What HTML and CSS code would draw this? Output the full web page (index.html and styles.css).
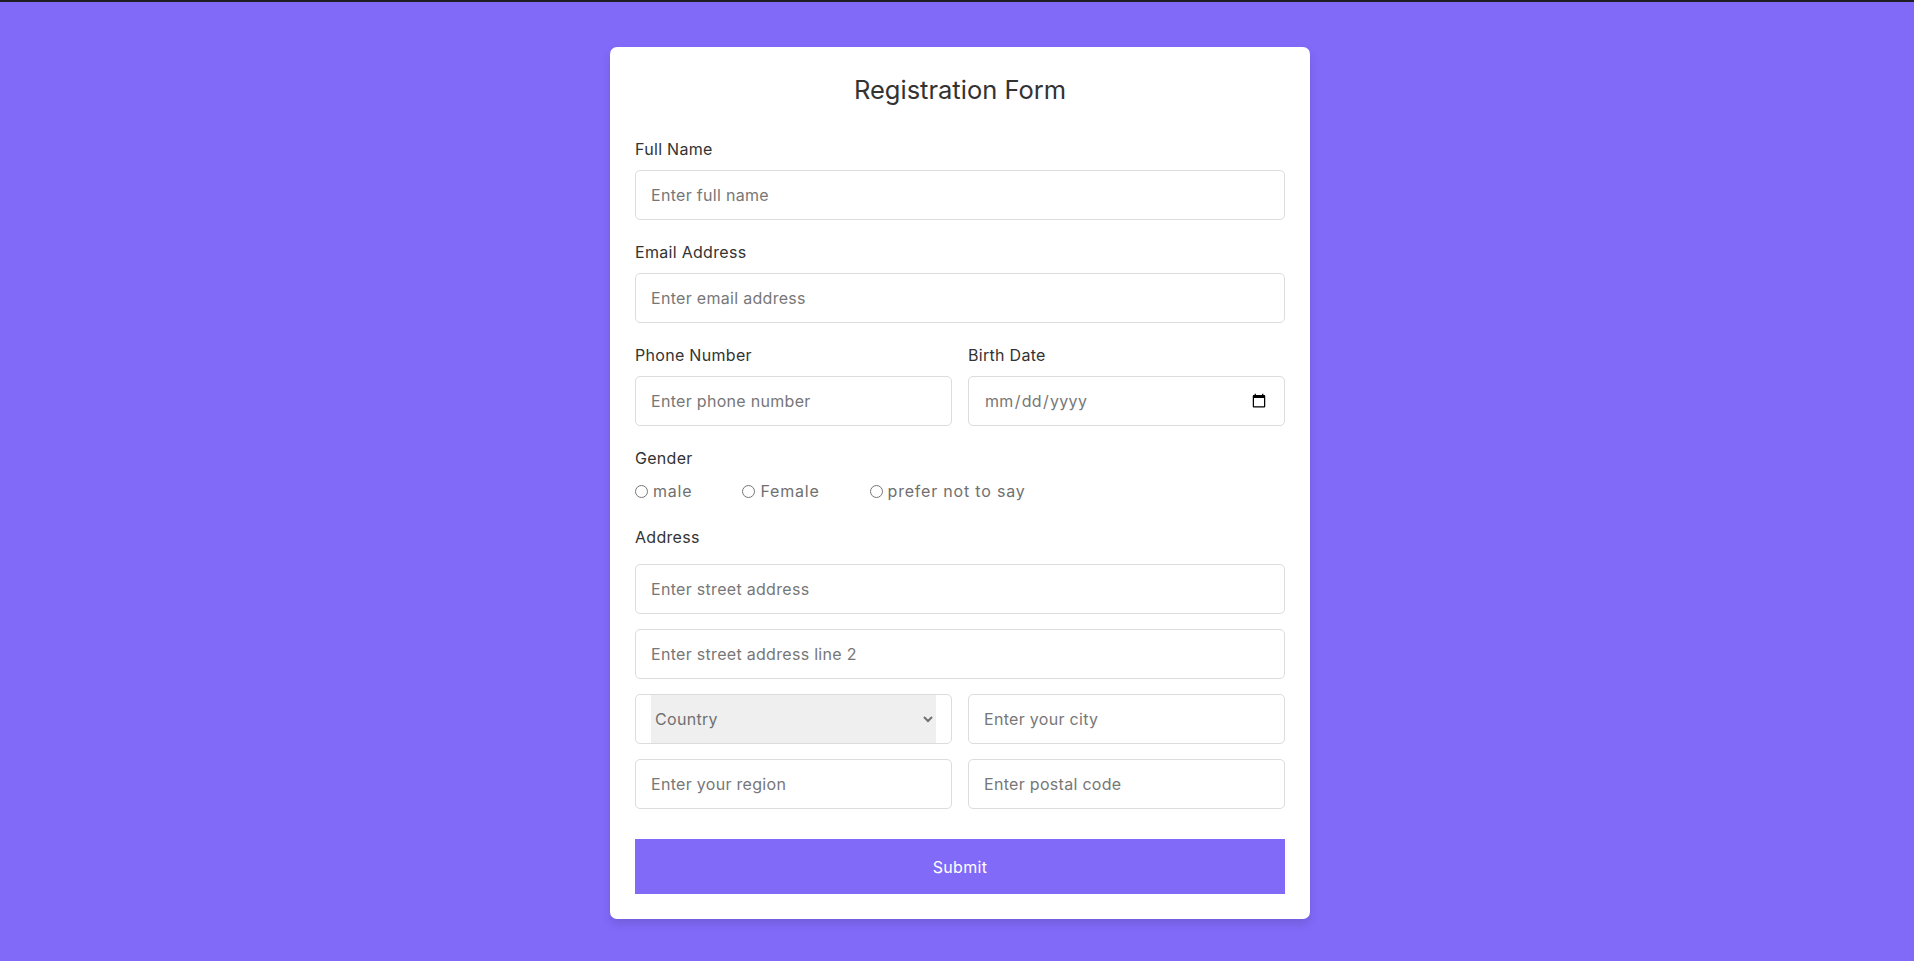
FILE: index.html
```html
<!DOCTYPE html>
<html lang="en">
<head>
<meta charset="utf-8">
<title>Registration Form</title>
<link rel="stylesheet" href="styles.css">
</head>
<body>
<div class="page">
  <div class="card">
    <h1 class="title">Registration Form</h1>
    <form class="form">
      <div class="field">
        <label class="label">Full Name</label>
        <input class="input" type="text" placeholder="Enter full name">
      </div>
      <div class="field">
        <label class="label">Email Address</label>
        <input class="input" type="text" placeholder="Enter email address">
      </div>
      <div class="row">
        <div class="field">
          <label class="label">Phone Number</label>
          <input class="input" type="text" placeholder="Enter phone number">
        </div>
        <div class="field">
          <label class="label">Birth Date</label>
          <input class="input date" type="date">
        </div>
      </div>
      <div class="field gender">
        <label class="label">Gender</label>
        <div class="options">
          <label class="option"><input class="radio" type="radio" name="gender">male</label>
          <label class="option"><input class="radio" type="radio" name="gender">Female</label>
          <label class="option"><input class="radio" type="radio" name="gender">prefer not to say</label>
        </div>
      </div>
      <div class="address">
        <label class="label address-label">Address</label>
        <div class="stack">
          <input class="input" type="text" placeholder="Enter street address">
          <input class="input" type="text" placeholder="Enter street address line 2">
          <div class="row tight">
            <div class="select-box">
              <select class="select">
                <option hidden selected>Country</option>
                <option>United States</option>
                <option>Canada</option>
                <option>United Kingdom</option>
              </select>
            </div>
            <input class="input" type="text" placeholder="Enter your city">
          </div>
          <div class="row tight">
            <input class="input" type="text" placeholder="Enter your region">
            <input class="input" type="text" placeholder="Enter postal code">
          </div>
        </div>
      </div>
      <button class="submit" type="button">Submit</button>
    </form>
  </div>
</div>
</body>
</html>
```

FILE: styles.css
```css
* {
  box-sizing: border-box;
}

html {
  border-top: 2px solid #1e1e24;
  background: #826af9;
}

body {
  margin: 0;
  font-family: Inter, "Noto Sans", "DejaVu Sans", sans-serif;
  letter-spacing: 0.3px;
  background: #826af9;
  min-height: 959px;
}

.page {
  display: flex;
  justify-content: center;
  padding: 45px 0 0 6px;
}

.card {
  width: 700px;
  background: #fff;
  border-radius: 7px;
  padding: 27px 25px 25px;
  box-shadow: 0 5px 10px rgba(0, 0, 0, 0.12);
}

.title {
  margin: 0 0 32px;
  text-align: center;
  font-size: 25.5px;
  line-height: 31px;
  font-weight: 400;
  letter-spacing: 0;
  color: #333;
}

.form {
  display: flex;
  flex-direction: column;
}

.field {
  display: flex;
  flex-direction: column;
  margin-bottom: 20px;
}

.label {
  display: block;
  font-size: 16px;
  line-height: 24px;
  color: #333;
  margin-bottom: 9px;
}

.input {
  width: 100%;
  height: 50px;
  border: 1px solid #dcdcdc;
  border-radius: 5px;
  padding: 0 15px;
  font-family: inherit;
  font-size: 16px;
  letter-spacing: 0.3px;
  color: #333;
  outline: none;
  background: #fff;
}

.input::placeholder {
  color: #777;
}

.date {
  color: #777;
}

.row {
  display: grid;
  grid-template-columns: 1fr 1fr;
  column-gap: 16px;
}

.row .field {
  margin-bottom: 20px;
}

.gender {
  margin-bottom: 22px;
}

.options {
  display: flex;
  gap: 50px;
  font-size: 16px;
  line-height: 24px;
  letter-spacing: 0.8px;
  color: #707070;
}

.option {
  display: flex;
  align-items: center;
}

.radio {
  width: 13px;
  height: 13px;
  margin: 0 5px 0 0;
}

.address-label {
  margin-bottom: 15px;
}

.stack {
  display: flex;
  flex-direction: column;
  gap: 15px;
}

.select-box {
  height: 50px;
  border: 1px solid #dcdcdc;
  border-radius: 5px;
  padding: 0 15px;
  background: #fff;
}

.select {
  width: 100%;
  height: 100%;
  border: none;
  outline: none;
  background-color: #efefef;
  font-family: inherit;
  font-size: 16px;
  letter-spacing: 0.3px;
  color: #707070;
}

.submit {
  margin-top: 30px;
  height: 55px;
  border: none;
  background: #826af9;
  color: #fff;
  font-family: inherit;
  font-size: 16px;
  letter-spacing: 0.3px;
  cursor: pointer;
}
```
